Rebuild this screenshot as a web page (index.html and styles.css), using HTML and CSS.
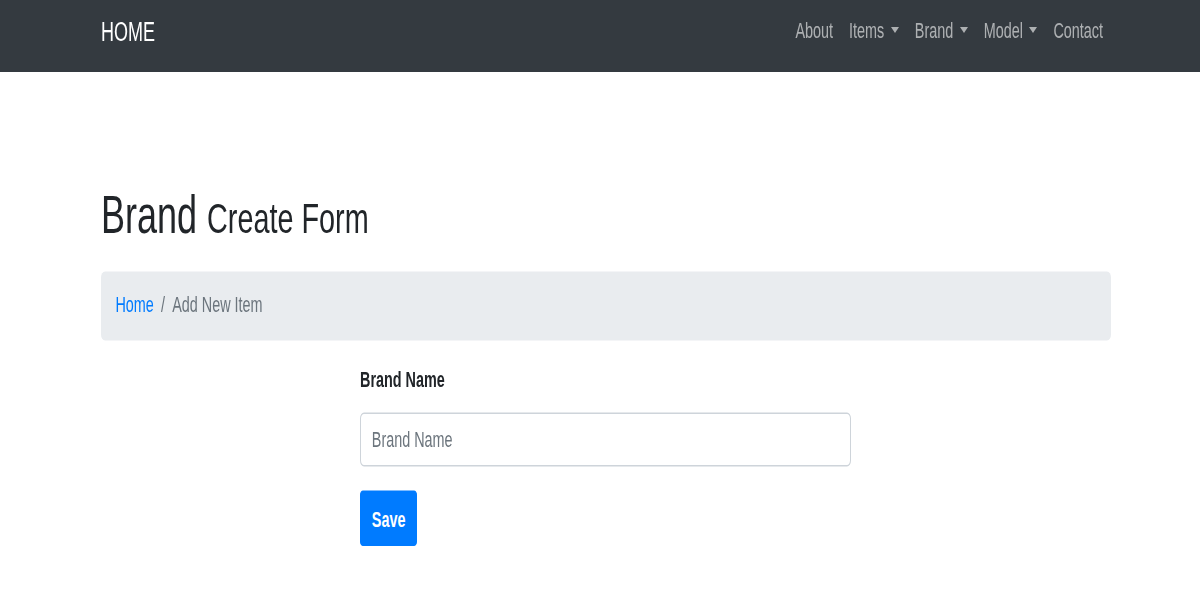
FILE: index.html
```html
<!DOCTYPE html>
<html lang="en">
<head>
<meta charset="utf-8">
<title>Brand Create Form</title>
<link rel="stylesheet" href="styles.css">
</head>
<body>
<div class="page">
  <nav class="navbar">
    <div class="nav-inner">
      <a class="brand" href="#">HOME</a>
      <ul class="nav-links">
        <li><a class="nav-link" href="#">About</a></li>
        <li><a class="nav-link toggle" href="#">Items</a></li>
        <li><a class="nav-link toggle" href="#">Brand</a></li>
        <li><a class="nav-link toggle" href="#">Model</a></li>
        <li><a class="nav-link" href="#">Contact</a></li>
      </ul>
    </div>
  </nav>
  <main class="container">
    <h1 class="title">Brand <small class="subtitle">Create Form</small></h1>
    <ol class="breadcrumb">
      <li class="crumb"><a href="#">Home</a></li>
      <li class="crumb active">Add New Item</li>
    </ol>
    <form class="form">
      <label class="label" for="brand">Brand Name</label>
      <input class="input" id="brand" type="text" placeholder="Brand Name">
      <button class="btn" type="button">Save</button>
    </form>
  </main>
</div>
</body>
</html>
```
FILE: styles.css
```css
html {
  overflow: hidden;
}
html, body {
  margin: 0;
  padding: 0;
  background: #fff;
}
body {
  height: 600px;
  font-family: "Liberation Sans", Arial, sans-serif;
  font-size: 14.4px;
  line-height: 1.5;
  color: #212529;
}
.page {
  height: 400px;
  transform: scaleY(1.5);
  transform-origin: top left;
}
.navbar {
  background: #343a40;
  height: 48px;
  box-sizing: border-box;
  padding-bottom: 6px;
  display: flex;
  align-items: center;
}
.nav-inner {
  width: 1010px;
  margin-left: 101px;
  display: flex;
  align-items: center;
  justify-content: space-between;
}
.brand {
  color: #fff;
  font-size: 18px;
  text-decoration: none;
  line-height: 1.5;
}
.nav-links {
  list-style: none;
  margin: 0;
  padding: 0;
  display: flex;
}
.nav-link {
  display: block;
  padding: 0 8px;
  color: rgba(255, 255, 255, 0.6);
  text-decoration: none;
}
.toggle::after {
  content: "";
  display: inline-block;
  margin-left: 6.5px;
  vertical-align: 3px;
  border-top: 4.3px solid;
  border-left: 4.3px solid transparent;
  border-right: 4.3px solid transparent;
}
.container {
  width: 1010px;
  margin-left: 101px;
  padding-top: 73px;
}
.title {
  margin: 0 0 16.5px;
  font-size: 36px;
  font-weight: 400;
  line-height: 1.2;
}
.subtitle {
  font-size: 80%;
  font-weight: 400;
}
.breadcrumb {
  list-style: none;
  margin: 0 0 16px;
  padding: 12.5px 14.4px;
  background: #e9ecef;
  border-radius: 4px;
  display: flex;
}
.crumb a {
  color: #007bff;
  text-decoration: none;
}
.crumb + .crumb::before {
  content: "/";
  color: #6c757d;
  padding: 0 7.2px;
}
.crumb.active {
  color: #6c757d;
}
.form {
  margin-left: 259px;
  width: 491px;
  display: flex;
  flex-direction: column;
  align-items: flex-start;
}
.label {
  font-weight: 700;
  margin-bottom: 10px;
}
.input {
  box-sizing: border-box;
  width: 100%;
  height: 36px;
  padding: 0 10.8px;
  font-family: inherit;
  font-size: 14.4px;
  color: #495057;
  border: 1px solid #ced4da;
  border-radius: 4px;
  margin-bottom: 16px;
}
.input::placeholder {
  color: #6c757d;
}
.btn {
  height: 37.3px;
  padding: 0 10.8px;
  font-family: inherit;
  font-size: 14.4px;
  font-weight: 700;
  color: #fff;
  background: #007bff;
  border: 1px solid #007bff;
  border-radius: 3px;
}
```
